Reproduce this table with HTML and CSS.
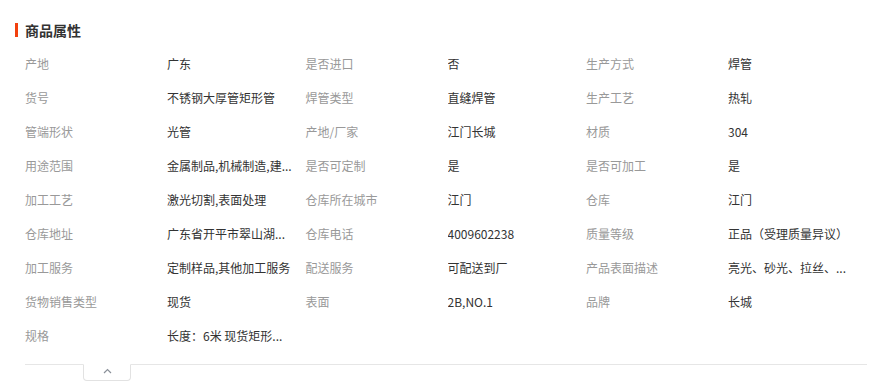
FILE: index.html
```html
<!DOCTYPE html>
<html lang="zh-CN">
<head>
<meta charset="utf-8">
<link rel="stylesheet" href="styles.css">
</head>
<body>
<div class="attrs">
  <h2 class="title">商品属性</h2>
  <div class="grid">
    <div class="k">产地</div><div class="v">广东</div>
    <div class="k">是否进口</div><div class="v">否</div>
    <div class="k">生产方式</div><div class="v">焊管</div>

    <div class="k">货号</div><div class="v">不锈钢大厚管矩形管</div>
    <div class="k">焊管类型</div><div class="v">直缝焊管</div>
    <div class="k">生产工艺</div><div class="v">热轧</div>

    <div class="k">管端形状</div><div class="v">光管</div>
    <div class="k">产地/厂家</div><div class="v">江门长城</div>
    <div class="k">材质</div><div class="v">304</div>

    <div class="k">用途范围</div><div class="v">金属制品,机械制造,建...</div>
    <div class="k">是否可定制</div><div class="v">是</div>
    <div class="k">是否可加工</div><div class="v">是</div>

    <div class="k">加工工艺</div><div class="v">激光切割,表面处理</div>
    <div class="k">仓库所在城市</div><div class="v">江门</div>
    <div class="k">仓库</div><div class="v">江门</div>

    <div class="k">仓库地址</div><div class="v">广东省开平市翠山湖...</div>
    <div class="k">仓库电话</div><div class="v">4009602238</div>
    <div class="k">质量等级</div><div class="v">正品（受理质量异议）</div>

    <div class="k">加工服务</div><div class="v">定制样品,其他加工服务</div>
    <div class="k">配送服务</div><div class="v">可配送到厂</div>
    <div class="k">产品表面描述</div><div class="v">亮光、砂光、拉丝、...</div>

    <div class="k">货物销售类型</div><div class="v">现货</div>
    <div class="k">表面</div><div class="v">2B,NO.1</div>
    <div class="k">品牌</div><div class="v">长城</div>

    <div class="k">规格</div><div class="v">长度：6米 现货矩形...</div>
  </div>
  <div class="fold">
    <button class="fold-btn" type="button" aria-label="收起">
      <svg width="9" height="6" viewBox="0 0 9 6"><path d="M1 5L4.5 1.5L8 5" fill="none" stroke="#8a9099" stroke-width="1.2"/></svg>
    </button>
  </div>
</div>
</body>
</html>
```
FILE: styles.css
```css
html, body {
  margin: 0;
  padding: 0;
  background: #fff;
}
body {
  font-family: "Noto Sans CJK SC", "Microsoft YaHei", sans-serif;
  font-size: 12px;
  color: #333;
}
.attrs {
  padding: 23px 3px 0 15px;
}
.title {
  margin: 0;
  font-size: 14px;
  line-height: 16px;
  font-weight: bold;
  color: #333;
  border-left: 3px solid #f2400e;
  padding-left: 7px;
  height: 14px;
  display: flex;
  align-items: center;
}
.grid {
  margin: 10px 0 0 10px;
  display: grid;
  grid-template-columns: 142px 138.5px 142px 138.5px 142px 138.5px;
  grid-auto-rows: 34px;
  line-height: 34px;
}
.k {
  color: #999;
  white-space: nowrap;
}
.v {
  color: #333;
  white-space: nowrap;
  overflow: hidden;
}
.fold {
  margin: 11px 0 0 10px;
  border-top: 1px solid #e6e6e6;
  height: 30px;
  padding-left: 58px;
}
.fold-btn {
  display: flex;
  align-items: center;
  justify-content: center;
  width: 48px;
  height: 17px;
  margin-top: -1px;
  padding: 0 0 3px 0;
  background: #fff;
  border: 1px solid #e2e2e2;
  border-top: 1px solid #fff;
  border-radius: 0 0 4px 4px;
  cursor: pointer;
}
```
